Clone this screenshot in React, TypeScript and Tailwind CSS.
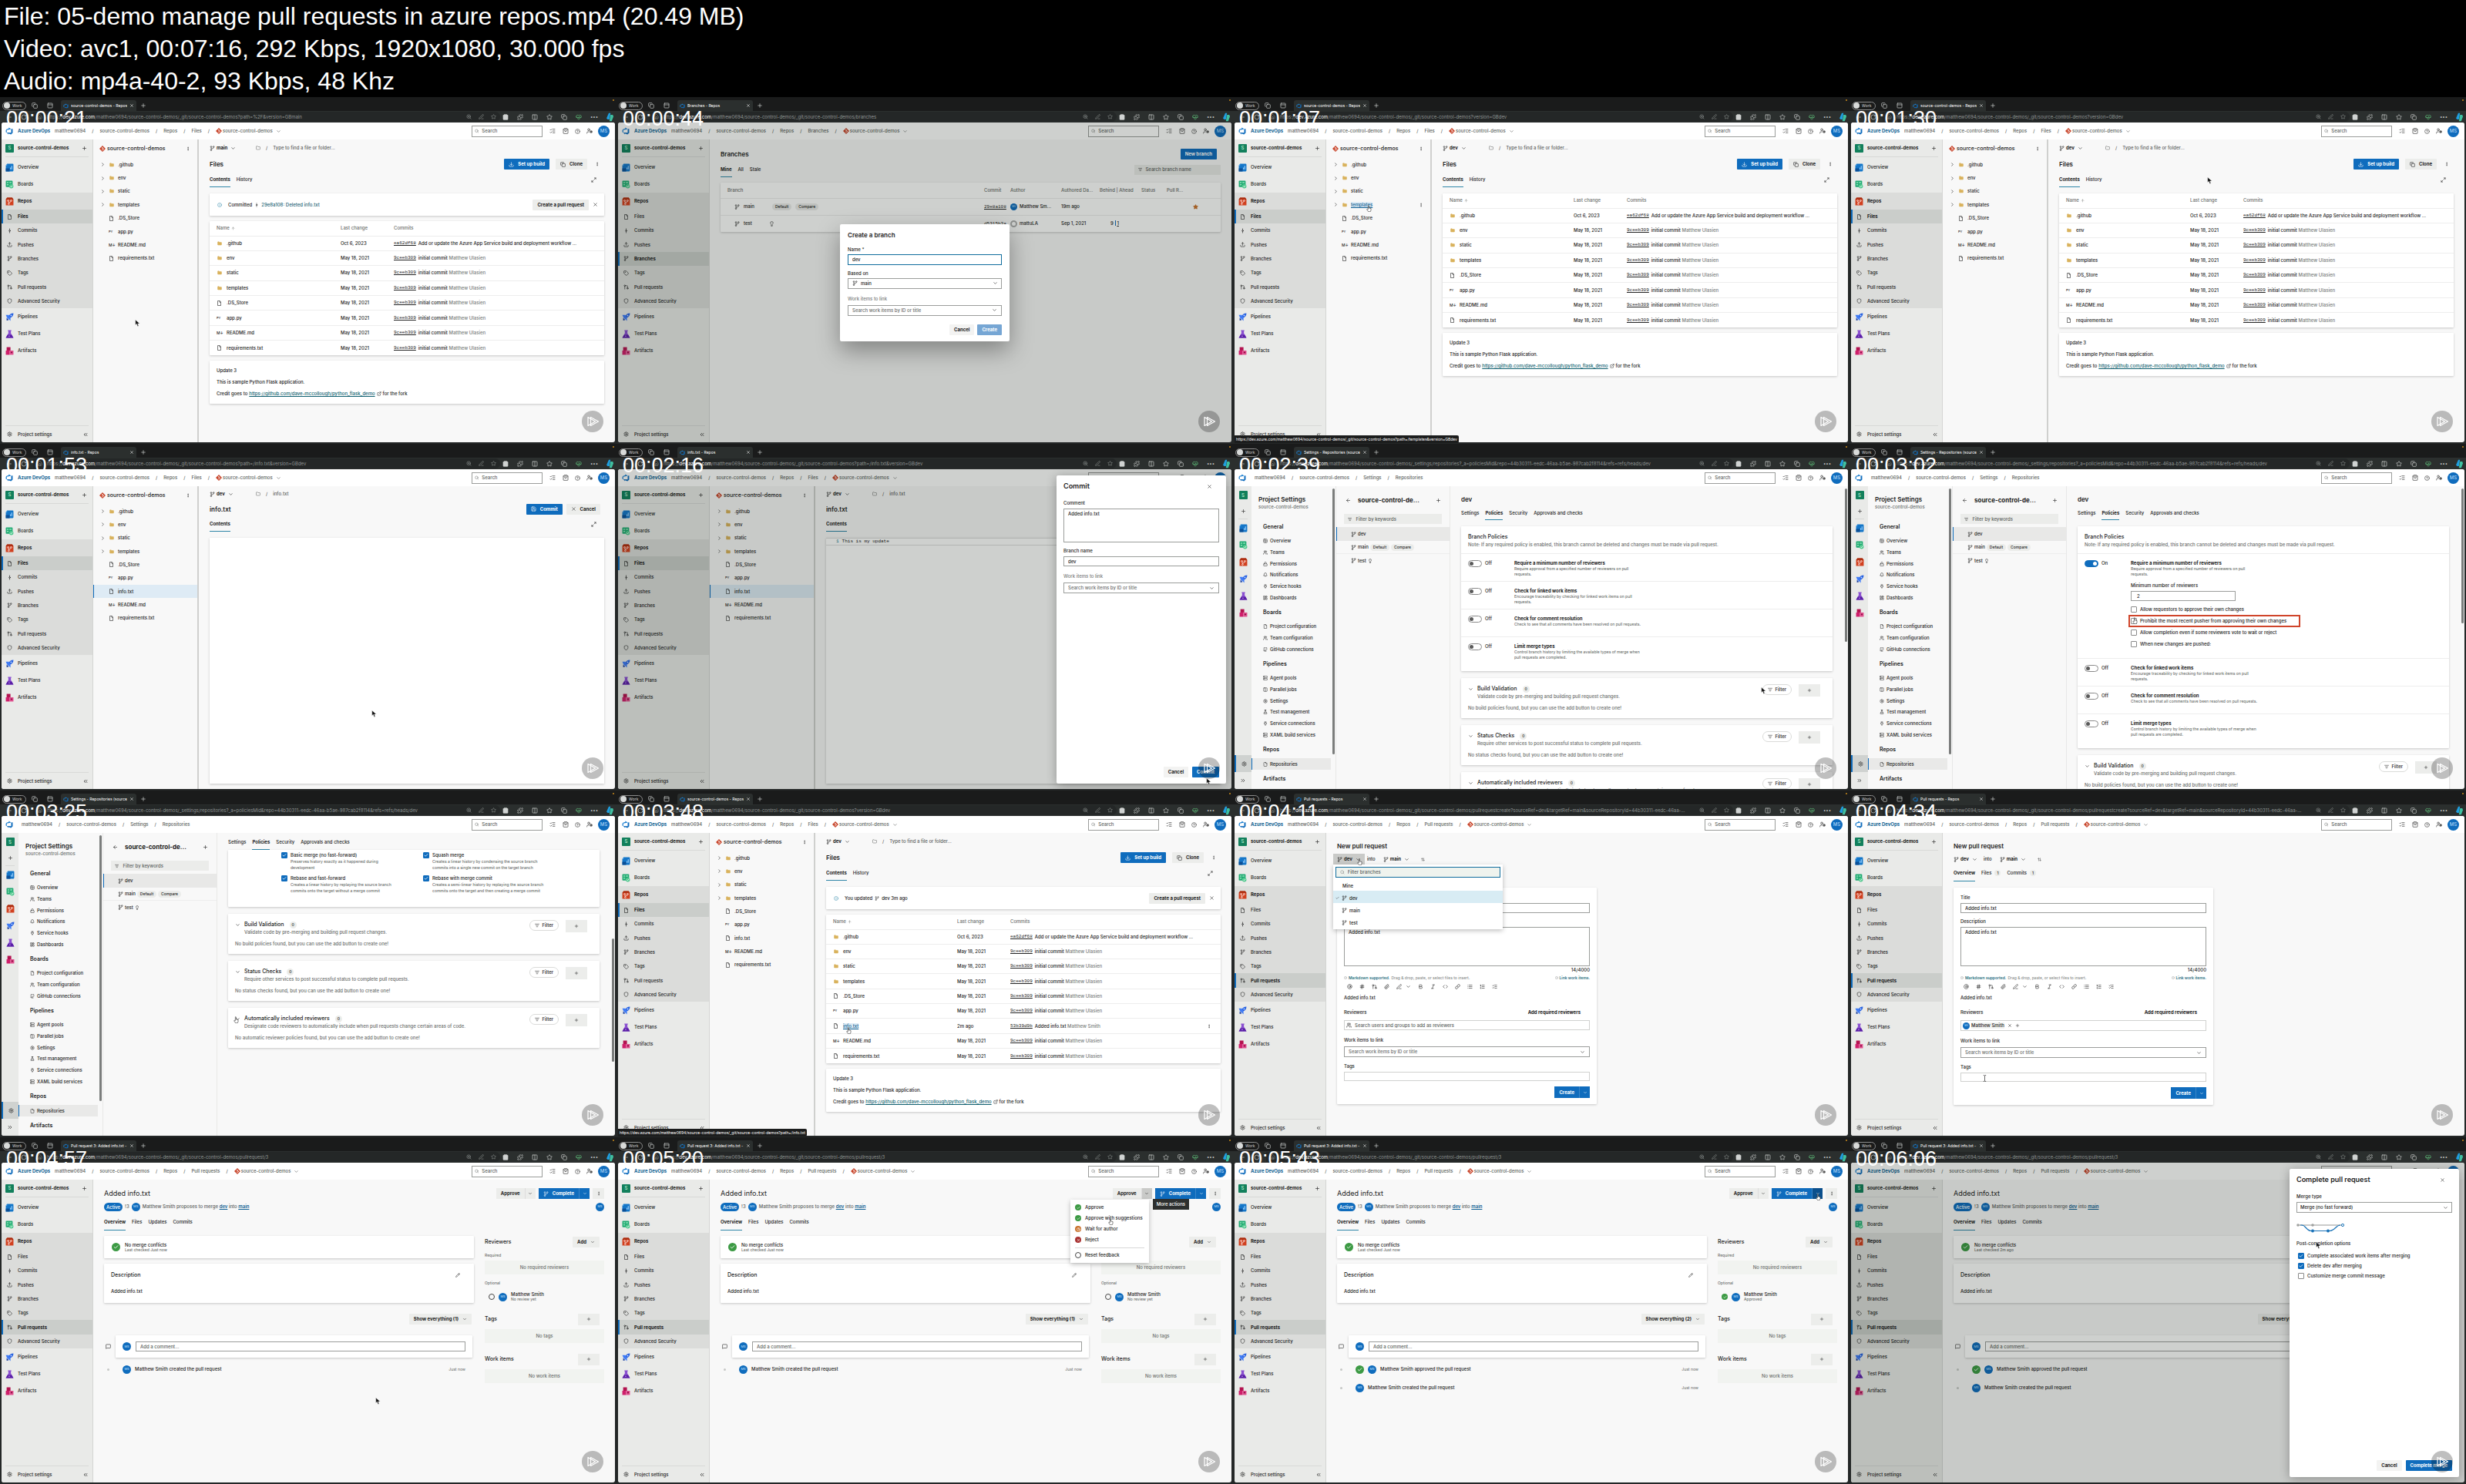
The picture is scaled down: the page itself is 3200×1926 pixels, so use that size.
import React from 'react';
import clsx from 'clsx';
import {
  ArrowLeft, ArrowUp, ArrowUpDown, AtSign, Bell, Bold, Check, ChevronDown, ChevronRight, ChevronsLeft,
  ChevronsRight, Clock, Code, Columns2, Copy, Download, ExternalLink, File, FlaskConical, Folder,
  GitCommitVertical, GitPullRequest, Github, Grid2x2, Hash, HeartPulse, House, Info, Italic, LayoutDashboard,
  Lightbulb, Link, List, ListChecks, ListFilter, ListOrdered, Lock, Maximize2, MessageSquare, MoreVertical,
  Paperclip, PanelTop, Pencil, Plug, Plus, Puzzle, RotateCw, Save, Search, Settings, Shield, ShoppingBag, Star,
  Tag, Upload, UserCog, Users, X, ZoomIn, CircleHelp, PenLine, Server,
} from 'lucide-react';

const ICON = 'size-[7px] shrink-0';
const CARD = 'shrink-0 rounded-[1px] bg-white shadow-[0_1px_3px_rgba(0,0,0,0.2)]';

/* ---------- small drawings ---------- */

function BranchIcon({ className = 'size-[7px]' }: { className?: string }) {
  return (
    <svg viewBox="0 0 14 14" className={clsx('shrink-0', className)} fill="none" stroke="currentColor" strokeWidth="1.2">
      <circle cx="4" cy="3" r="1.6" />
      <circle cx="10.5" cy="3" r="1.6" />
      <circle cx="4" cy="11.5" r="1.6" />
      <path d="M4 4.6v5.3M10.5 4.6c0 3-3.5 2.6-6.5 4" />
    </svg>
  );
}

function PageIcon({ className = 'size-[7px]' }: { className?: string }) {
  return (
    <svg viewBox="0 0 14 14" className={clsx('shrink-0', className)} fill="none" stroke="currentColor" strokeWidth="1.2">
      <path d="M3 1h5.500L11 4v9H3zM8 1v3.500h3" />
    </svg>
  );
}

function GitIcon() {
  return (
    <svg viewBox="0 0 14 14" className="size-[8px] shrink-0">
      <path d="M7 0l7 7-7 7-7-7z" fill="#c8452b" />
      <path d="M5 3l2.5 2.5M7 5v5M7.2 5.5l2.2 2" stroke="#fff" strokeWidth="1" />
      <circle cx="7" cy="5" r="1" fill="#fff" />
      <circle cx="7" cy="10" r="1" fill="#fff" />
      <circle cx="9.6" cy="7.4" r="1" fill="#fff" />
    </svg>
  );
}

function DevOpsLogo({ className }: { className: string }) {
  return (
    <svg viewBox="0 0 18 18" className={clsx('shrink-0', className)}>
      <path d="M17 4v9.7l-4 3.3-6.2-2.2V17l-3.5-4.6 10.2.8V4.500z" fill="#0f6cbd" />
      <path d="M13.600 4.500L7.900 1v2.300L2.700 4.800 1 7v4.900l2.300 1V6.600z" fill="#1b7fd0" />
    </svg>
  );
}

function OverviewIcon() {
  return (
    <svg viewBox="0 0 20 20" className="size-[11px] shrink-0">
      <path d="M4 1h13a2 2 0 012 2v14a2 2 0 01-2 2H1V5z" fill="#1476c8" />
      <path d="M4 1v4H1z" fill="#6cb8f2" />
      <path d="M1 12h9v7H1z" fill="#0b4f96" />
      <path d="M11 10h2v4h-2zM14 6h2v8h-2z" fill="#9fd4ff" />
    </svg>
  );
}

function BoardsIcon() {
  return (
    <svg viewBox="0 0 20 20" className="size-[11px] shrink-0">
      <rect x="1" y="1" width="16" height="15" rx="1.500" fill="#1fa971" />
      <path d="M3.500 4h4v3h-4zM3.500 9h4v3h-4zM9.500 4h5v3h-5z" fill="#8fe0b8" />
      <circle cx="14" cy="14" r="5" fill="#52c98f" />
      <path d="M11.500 14l2 2 3.300-3.500" stroke="#fff" strokeWidth="1.500" fill="none" />
    </svg>
  );
}

function ReposIcon() {
  return (
    <svg viewBox="0 0 20 20" className="size-[11px] shrink-0">
      <path d="M4 1h12l3 4v14H1V5z" fill="#d1401f" />
      <path d="M4 1h12l3 4H1z" fill="#a82c10" />
      <g fill="none" stroke="#fff" strokeWidth="1.300">
        <circle cx="6.500" cy="8" r="1.600" />
        <circle cx="13.500" cy="8" r="1.600" />
        <circle cx="8" cy="15.500" r="1.600" />
        <path d="M7 9.500l1 4.400M13 9.500c-.5 3-4 2-4.800 4" />
      </g>
    </svg>
  );
}

function PipelinesIcon() {
  return (
    <svg viewBox="0 0 20 20" className="size-[11px] shrink-0">
      <path d="M19 1c-6 0-9 3-11 7l4 4c4-2 7-5 7-11z" fill="#2560e0" />
      <path d="M1 5h7l4 7v7l-4-4-4-3z" fill="#3f7bf5" />
      <path d="M3 12l5 5-5 1z" fill="#12389c" />
      <circle cx="13.500" cy="6.500" r="1.800" fill="#bcd3ff" />
    </svg>
  );
}

function TestPlansIcon() {
  return (
    <svg viewBox="0 0 20 20" className="size-[11px] shrink-0">
      <path d="M6 1h8v2h-1v5l6 11H1L7 8V3H6z" fill="#8a4fd0" />
      <path d="M5 12h10l4 7H1z" fill="#5a1fa6" />
      <circle cx="9" cy="15" r="1.200" fill="#d8b8ff" />
    </svg>
  );
}

function ArtifactsIcon() {
  return (
    <svg viewBox="0 0 20 20" className="size-[11px] shrink-0">
      <path d="M3 1h9v8H3z" fill="#b3124f" />
      <path d="M1 9h9v10H1z" fill="#cf1f6b" />
      <path d="M10 9h9v10h-9z" fill="#e0508f" />
      <path d="M12.500 12h4v3h-4z" fill="#8e0c40" />
    </svg>
  );
}

function ProjectBadge() {
  return <span className="grid size-[11px] shrink-0 place-items-center rounded-[1px] bg-[#12805c] text-[#bff0d8]">S</span>;
}

function Avatar({ className = 'size-[11px] text-[4px]' }: { className?: string }) {
  return (
    <span className={clsx('grid shrink-0 place-items-center rounded-full bg-[#0f6cbd] text-[#a9d2f5]', className)}>MS</span>
  );
}

function Dot({ kind }: { kind: 'ok' | 'wait' | 'no' | 'none' }) {
  if (kind === 'none') return <span className="size-[8px] shrink-0 rounded-full border border-[#444]" />;
  const Glyph = kind === 'ok' ? Check : kind === 'wait' ? Clock : X;
  return (
    <span
      className={clsx(
        'grid size-[8px] shrink-0 place-items-center rounded-full text-white',
        kind === 'ok' && 'bg-[#3c9a44]',
        kind === 'wait' && 'bg-[#c8702a]',
        kind === 'no' && 'bg-[#a83232]'
      )}
    >
      <Glyph className="size-[5px]" strokeWidth={3} />
    </span>
  );
}

function OkCircle() {
  return (
    <span className="grid size-[11px] shrink-0 place-items-center rounded-full bg-[#3c9a44] text-white">
      <Check className="size-[7px]" strokeWidth={3} />
    </span>
  );
}

function Watermark() {
  return (
    <svg viewBox="0 0 28 28" className="absolute right-[17px] bottom-[15px] z-20 size-[28px]">
      <circle cx="14" cy="14" r="14" fill="#000" fillOpacity=".25" />
      <g fill="none" stroke="#fff" strokeWidth="1.200" strokeLinejoin="round">
        <path d="M8 8.500v11l9.500-5.500z" />
        <path d="M11.500 8.500v11l10-5.500z" />
      </g>
    </svg>
  );
}

function Cursor({ kind = 'arrow', at }: { kind?: 'arrow' | 'hand' | 'text'; at: string }) {
  return (
    <svg viewBox="0 0 12 16" className={clsx('absolute z-30 h-[9px] w-[7px]', at)} stroke="#fff" strokeWidth=".8">
      {kind === 'arrow' && <path d="M1 0v12l3-2.500L6 15l2.500-1-2-5H11z" fill="#111" />}
      {kind === 'hand' && (
        <path d="M4 1.500c1-1 2 0 2 1V7l4.500 1v4L9 15.500H4.500L1 10.500 2 9l2 1z" fill="#fff" stroke="#222" strokeWidth="1" />
      )}
      {kind === 'text' && <path d="M3 1h2l1 1 1-1h2M6 2v12M3 15h2l1-1 1 1h2" fill="none" stroke="#222" strokeWidth="1.200" />}
    </svg>
  );
}

/* ---------- browser shell ---------- */

function Chrome({ tab, url }: { tab: string; url: string }) {
  return (
    <div className="shrink-0 font-normal text-[#d0d3d2]">
      <div className="flex h-[18px] items-end bg-[#1a1b1b]">
        <div className="flex h-[14px] flex-1 items-center pl-[3px]">
          <span className="flex h-[11px] w-[31px] items-center gap-[3px] rounded-full border border-[#8a8a8a] pl-[1px] text-[5px]">
            <span className="size-[8px] rounded-full bg-[#d8dad9]" />
            Work
          </span>
          <Copy className="ml-[7px] size-[8px]" />
          <PanelTop className="ml-[12px] size-[8px]" />
          <div className="ml-[10px] flex h-full w-[98px] items-center gap-[3px] rounded-t-[3px] bg-[#2b2f2e] px-[3px] text-[5px] text-white">
            <DevOpsLogo className="size-[7px]" />
            <span className="flex-1 overflow-hidden whitespace-nowrap">{tab}</span>
            <X className="size-[6px] shrink-0" />
          </div>
          <Plus className="ml-[5px] size-[8px]" />
        </div>
        <span className="mr-[3px] mb-[13px] size-[2px] rounded-full bg-[#c98a1b]" />
      </div>
      <div className="flex h-[15px] items-center bg-[#2b2f2e]">
        <ArrowLeft className="ml-[8px] size-[8px]" />
        <RotateCw className="ml-[11px] size-[8px]" />
        <div className="ml-[8px] flex h-[13px] w-[606px] items-center rounded-r-full bg-[#242727] pl-[5px] text-[#8f9493]">
          <House className="size-[7px]" />
          <div className="ml-[6px] w-[528px] truncate">
            https://<span className="text-white">dev.azure.com</span>/{url}
          </div>
          <div className="ml-auto flex gap-[9px] pr-[5px]">
            <ZoomIn className="size-[7px]" />
            <PenLine className="size-[7px]" />
            <Star className="size-[7px]" />
          </div>
        </div>
        <div className="ml-auto flex items-center gap-[11px] pr-[4px]">
          <ShoppingBag className="size-[8px]" fill="currentColor" />
          <Puzzle className="size-[8px]" />
          <Columns2 className="size-[8px]" />
          <Star className="size-[8px]" />
          <Copy className="size-[8px]" />
          <HeartPulse className="size-[8px] text-[#5fbf7a]" />
          <span>•••</span>
          <svg viewBox="0 0 12 14" className="h-[12px] w-[9px]">
            <path d="M4 0h3L5 11H2L0 9z" fill="#1f9fe0" />
            <path d="M7 3h4l1 3-3 8H5z" fill="#3fc0a0" />
          </svg>
        </div>
      </div>
    </div>
  );
}

function TopBar({ crumbs, repo, compact }: { crumbs: string[]; repo?: boolean; compact?: boolean }) {
  return (
    <header className="flex h-[22px] shrink-0 items-center bg-white pl-[5px] text-[#5c5f5d]">
      <DevOpsLogo className="size-[10px]" />
      {!compact && <a href="#" className="ml-[6px] font-bold text-[#0f5f92]">Azure DevOps</a>}
      <nav className={clsx('flex items-center gap-[8px]', compact ? 'ml-[11px]' : 'ml-[6px]')}>
        {crumbs.map((c, i) => (
          <React.Fragment key={i}>
            {i > 0 && <span>/</span>}
            <a href="#">{c}</a>
          </React.Fragment>
        ))}
        {repo && (
          <>
            <span>/</span>
            <a href="#" className="flex items-center gap-[1px]">
              <GitIcon />
              source-control-demos
              <ChevronDown className="ml-[3px] size-[7px]" />
            </a>
          </>
        )}
      </nav>
      <div className="ml-auto flex items-center">
        <label className="flex h-[15px] w-[92px] items-center gap-[4px] border border-[#9b9d9b] bg-white px-[3px]">
          <Search className="size-[6px]" />
          <input aria-label="Search" placeholder="Search" className="w-full placeholder:text-[#5c5f5d]" />
        </label>
        <ListChecks className="ml-[9px] size-[8px] text-[#333]" />
        <ShoppingBag className="ml-[9px] size-[8px] text-[#333]" />
        <CircleHelp className="ml-[8px] size-[7px] text-[#333]" />
        <UserCog className="ml-[8px] size-[8px] text-[#333]" />
        <Avatar className="mr-[7px] ml-[7px] size-[15px] text-[6px]" />
      </div>
    </header>
  );
}

const repoLinks = [
  { name: 'Files', icon: PageIcon },
  { name: 'Commits', icon: GitCommitVertical },
  { name: 'Pushes', icon: Upload },
  { name: 'Branches', icon: BranchIcon },
  { name: 'Tags', icon: Tag },
  { name: 'Pull requests', icon: GitPullRequest },
  { name: 'Advanced Security', icon: Shield },
];

function Sidebar({ active }: { active: string }) {
  return (
    <aside className="flex w-[119px] shrink-0 flex-col border-r border-[#d4d5d3] bg-[#e9eae8] text-[#1a1a1a]">
      <div className="mx-[5px] flex h-[23px] items-center gap-[5px] border-b border-[#d8d9d7]">
        <ProjectBadge />
        <span className="font-bold">source-control-demos</span>
        <Plus className="mr-[2px] ml-auto size-[7px]" />
      </div>
      <a href="#" className="mt-[2px] flex h-[22px] items-center gap-[5px] pl-[5px]"><OverviewIcon />Overview</a>
      <a href="#" className="flex h-[22px] items-center gap-[5px] pl-[5px]"><BoardsIcon />Boards</a>
      <div className="bg-[#dbdcda]">
        <a href="#" className="flex h-[22px] items-center gap-[5px] pl-[5px] font-bold"><ReposIcon />Repos</a>
        <div className="grid h-[128px] auto-rows-fr">
          {repoLinks.map(({ name, icon: Icon }) => (
            <a
              key={name}
              href="#"
              className={clsx(
                'flex items-center gap-[7px] border-l-2 pl-[5px]',
                name === active ? 'border-[#0f6cbd] bg-[#cacdca] font-bold' : 'border-transparent'
              )}
            >
              <Icon className={ICON} />
              {name}
            </a>
          ))}
        </div>
      </div>
      <a href="#" className="flex h-[22px] items-center gap-[5px] pl-[5px]"><PipelinesIcon />Pipelines</a>
      <a href="#" className="flex h-[22px] items-center gap-[5px] pl-[5px]"><TestPlansIcon />Test Plans</a>
      <a href="#" className="flex h-[22px] items-center gap-[5px] pl-[5px]"><ArtifactsIcon />Artifacts</a>
      <a href="#" className="mx-[5px] mt-auto flex h-[22px] items-center gap-[7px] border-t border-[#d8d9d7] pl-[2px]">
        <Settings className={ICON} />
        Project settings
        <ChevronsLeft className="ml-auto size-[8px]" />
      </a>
    </aside>
  );
}

type FrameProps = {
  time: string;
  tab: string;
  url: string;
  crumbs?: string[];
  compact?: boolean;
  status?: string;
  cursor?: React.ReactNode;
  overlay?: React.ReactNode;
  children: React.ReactNode;
};

function Frame({ time, tab, url, crumbs = ['Files'], compact, status, cursor, overlay, children }: FrameProps) {
  const base = compact ? ['matthew0694', 'source-control-demos'] : ['matthew0694', 'source-control-demos', 'Repos'];
  return (
    <section className="relative flex aspect-video flex-col overflow-hidden bg-[#242727]">
      <Chrome tab={tab} url={'matthew0694/source-control-demos/' + url} />
      <div className="relative mx-[2px] mb-[2px] flex min-h-0 flex-1 flex-col overflow-hidden rounded-[3px] bg-[#f8f8f8]">
        <TopBar crumbs={[...base, ...crumbs]} repo={!compact} compact={compact} />
        <div className="flex min-h-0 flex-1">{children}</div>
        {overlay && <div className="absolute inset-0 bg-[#0a1408]/20">{overlay}</div>}
      </div>
      {status && (
        <div className="absolute bottom-px left-[2px] z-20 h-[10px] rounded-r-[2px] bg-[#1c1d1d] px-[2px] text-[5px] leading-[10px] font-normal text-white">
          {status}
        </div>
      )}
      <Watermark />
      {cursor}
      <time className="absolute top-[15px] left-[8px] z-20 font-['Liberation_Sans',sans-serif] text-[27px] leading-[27px] font-normal text-white">
        {time}
      </time>
    </section>
  );
}

/* ---------- shared controls ---------- */

function Button({ primary, className, children }: { primary?: boolean; className?: string; children: React.ReactNode }) {
  return (
    <button
      className={clsx(
        'flex h-[14px] shrink-0 items-center justify-center gap-[5px] rounded-[1px] px-[6px] font-bold whitespace-nowrap',
        primary ? 'bg-[#0f6cbd] text-white' : 'bg-[#ecedeb] text-[#222]',
        className
      )}
    >
      {children}
    </button>
  );
}

function Tabs({ items, active, counts, className }: { items: string[]; active: string; counts?: string[]; className?: string }) {
  return (
    <nav className={clsx('flex shrink-0 gap-[8px] text-[#222]', className)}>
      {items.map((t, i) => (
        <a
          key={t}
          href="#"
          className={clsx('flex items-center gap-[4px] border-b', t === active ? 'border-[#2f86a8] font-bold' : 'border-transparent')}
        >
          {t}
          {counts?.[i] && <span className="rounded-full bg-[#eaebe9] px-[3px] text-[5px]">{counts[i]}</span>}
        </a>
      ))}
    </nav>
  );
}

function TickBox({ label, note, checked }: { label: string; note?: string; checked?: boolean }) {
  return (
    <label className="flex gap-[4px] text-[#222]">
      <span className="relative h-[8px] shrink-0">
        <input type="checkbox" defaultChecked={checked} className="block size-[8px] appearance-none rounded-[1px] border border-[#8a8a8a] bg-white checked:border-[#0f6cbd] checked:bg-[#0f6cbd]" />
        {checked && <Check className="absolute top-px left-px size-[6px] text-white" strokeWidth={3} />}
      </span>
      <span className="leading-[8px]">
        {label}
        {note && <span className="block text-[5px] leading-[8px] text-[#6b6e6c]">{note}</span>}
      </span>
    </label>
  );
}

function Combo({ label, dim, className }: { label: string; dim?: boolean; className?: string }) {
  return (
    <label className={clsx('block', className)}>
      <span className={clsx('block h-[12px] leading-[12px]', dim && 'text-[#7a7d7b]')}>{label}</span>
      <span className="mt-[2px] flex h-[14px] items-center border border-[#9b9d9b] bg-white px-[5px]">
        <input placeholder="Search work items by ID or title" className="w-full placeholder:text-[#6b6e6c]" />
        <ChevronDown className={ICON} />
      </span>
    </label>
  );
}

function SidePanel({ title, action, children }: { title: string; action: string; children: React.ReactNode }) {
  return (
    <div className="absolute top-[8px] right-[7px] bottom-[7px] flex w-[220px] flex-col rounded-[2px] bg-white px-[9px] text-[#222] shadow-[0_2px_14px_rgba(0,0,0,0.3)]">
      <div className="flex h-[28px] items-center justify-between pr-[9px]">
        <h2 className="text-[9px] font-semibold">{title}</h2>
        <X className={ICON} />
      </div>
      {children}
      <div className="mt-auto mb-[8px] flex justify-end gap-[5px]">
        <Button className="bg-[#f3f3f2]">Cancel</Button>
        <Button primary>{action}</Button>
      </div>
    </div>
  );
}

/* ---------- repo files ---------- */

const baseFiles = ['.github', 'env', 'static', 'templates', '.DS_Store', 'app.py', 'README.md', 'requirements.txt'];
const filesWithInfo = ['.github', 'env', 'static', 'templates', '.DS_Store', 'app.py', 'info.txt', 'README.md', 'requirements.txt'];
const folders = ['.github', 'env', 'static', 'templates'];

function FileIcon({ name }: { name: string }) {
  if (folders.includes(name)) return <Folder className="size-[6px] shrink-0 text-[#d9b25c]" fill="currentColor" />;
  if (name === 'app.py') return <span className="w-[7px] shrink-0 text-[4px]">PY</span>;
  if (name === 'README.md') return <span className="w-[7px] shrink-0 text-[5px]">M↓</span>;
  return <PageIcon />;
}

function Tree({ files, selected, hovered }: { files: string[]; selected?: string; hovered?: string }) {
  return (
    <div className="w-[137px] shrink-0 border-r-2 border-[#cfd0ce] text-[#222]">
      <div className="flex h-[24px] items-center gap-[2px] pl-[8px] text-[7px]">
        <GitIcon />
        source-control-demos
        <MoreVertical className="mr-[9px] ml-auto size-[6px]" />
      </div>
      <div className={clsx('grid auto-rows-fr', files.length > 8 ? 'h-[156px]' : 'h-[139px]')}>
        {files.map(f => (
          <a
            key={f}
            href="#"
            className={clsx(
              'flex items-center gap-[5px] border-l pl-[8px]',
              f === selected ? 'border-[#0f6cbd] bg-[#deebf5]' : 'border-transparent'
            )}
          >
            <span className="w-[6px]">{folders.includes(f) && <ChevronRight className={ICON} />}</span>
            <span className="flex w-[7px] justify-center"><FileIcon name={f} /></span>
            <span className={clsx(f === hovered && 'bg-[#deebf5] text-[#0f5f92] underline')}>{f}</span>
            {f === hovered && <MoreVertical className="mr-[9px] ml-auto size-[6px]" />}
          </a>
        ))}
      </div>
    </div>
  );
}

function BranchBar({ branch, path, className }: { branch: string; path: string; className: string }) {
  return (
    <div className={clsx('flex shrink-0 items-center text-[#5c5f5d]', className)}>
      <button className="flex w-[60px] items-center gap-[2px] font-bold text-[#222]">
        <BranchIcon />
        {branch}
        <ChevronDown className="ml-[2px] size-[7px]" />
      </button>
      <Folder className="size-[6px]" />
      <span className="mx-[7px]">/</span>
      {path}
    </div>
  );
}

function Files({ branch, banner, files = baseFiles, hovered }: { branch: string; banner?: React.ReactNode; files?: string[]; hovered?: string }) {
  return (
    <main className="flex min-w-0 flex-1 flex-col px-[14px] text-[#222]">
      <BranchBar branch={branch} path="Type to find a file or folder..." className="h-[22px]" />
      <div className="flex h-[20px] shrink-0 items-center gap-[8px]">
        <h1 className="mr-auto text-[8px] font-semibold">Files</h1>
        <Button primary><Download className={ICON} />Set up build</Button>
        <Button><Copy className={ICON} />Clone</Button>
        <MoreVertical className="mr-[6px] ml-[2px] size-[6px]" />
      </div>
      <div className="flex h-[20px] shrink-0 items-stretch justify-between">
        <Tabs items={['Contents', 'History']} active="Contents" />
        <Maximize2 className="mr-[10px] size-[7px] self-center" />
      </div>
      {banner && (
        <div className={clsx(CARD, 'mt-[8px] flex h-[29px] items-center gap-[3px] pr-[8px] pl-[10px]')}>
          <Info className="mr-[5px] size-[6px] text-[#2f86a8]" />
          {banner}
          <Button className="ml-auto">Create a pull request</Button>
          <X className="ml-[2px] size-[7px]" />
        </div>
      )}
      <table
        className={clsx(
          CARD,
          'w-full table-fixed border-collapse text-left',
          files.length > 8 ? 'h-[193px]' : 'h-[174px]',
          banner ? 'mt-[7px]' : 'mt-[8px]'
        )}
      >
        <thead>
          <tr className="h-[19px] text-[#6b6e6c]">
            <th className="w-[170px] pl-[9px] font-medium"><span className="flex items-center gap-[2px]">Name <ArrowUp className="size-[5px]" /></span></th>
            <th className="w-[69px] font-medium">Last change</th>
            <th className="font-medium">Commits</th>
          </tr>
        </thead>
        <tbody>
          {files.map(f => (
            <tr key={f} className="h-[19px] border-t border-[#ededed]">
              <td className="pl-[9px]">
                <span className="flex items-center gap-[6px]">
                  <span className="flex w-[7px] justify-center"><FileIcon name={f} /></span>
                  <span className={clsx(f === hovered && 'bg-[#deebf5] text-[#0f5f92] underline')}>{f}</span>
                </span>
              </td>
              <td>{f === '.github' ? 'Oct 6, 2023' : f === 'info.txt' ? '2m ago' : 'May 18, 2021'}</td>
              <td className="pr-[12px]">
                <div className="flex items-center gap-[3px]">
                  <a href="#" className="font-['Liberation_Mono',monospace] underline">
                    {f === '.github' ? 'ea62df68' : f === 'info.txt' ? '53b39d9b' : '9ceeb309'}
                  </a>
                  {f === '.github' ? (
                    <span className="whitespace-nowrap">Add or update the Azure App Service build and deployment workflow ...</span>
                  ) : (
                    <span>
                      {f === 'info.txt' ? 'Added info.txt ' : 'initial commit '}
                      <span className="text-[#7a7d7b]">{f === 'info.txt' ? 'Matthew Smith' : 'Matthew Ulasien'}</span>
                    </span>
                  )}
                  {f === hovered && <MoreVertical className="ml-auto size-[6px]" />}
                </div>
              </td>
            </tr>
          ))}
        </tbody>
      </table>
      <div className={clsx(CARD, 'mt-[7px] h-[56px] px-[9px] pt-[5px] leading-[15px]')}>
        <p>Update 3</p>
        <p>This is sample Python Flask application.</p>
        <p className="flex items-center gap-[2px]">
          Credit goes to <a href="#" className="text-[#0f5f6f] underline">https://github.com/dave-mccollough/python_flask_demo</a>
          <ExternalLink className="size-[6px]" /> for the fork
        </p>
      </div>
    </main>
  );
}

function Editor({ text, buttons }: { text?: string; buttons?: boolean }) {
  return (
    <main className="flex min-w-0 flex-1 flex-col px-[14px] pb-[7px] text-[#222]">
      <BranchBar branch="dev" path="info.txt" className="h-[20px]" />
      <div className="flex h-[19px] shrink-0 items-center gap-[5px] pr-[5px]">
        <h1 className="mr-auto text-[8px] font-semibold">info.txt</h1>
        {buttons && (
          <>
            <Button primary><Save className={ICON} />Commit</Button>
            <Button><X className={ICON} />Cancel</Button>
          </>
        )}
      </div>
      <div className="flex h-[20px] shrink-0 items-stretch justify-between">
        <Tabs items={['Contents']} active="Contents" />
        <Maximize2 className="mr-[10px] size-[7px] self-center" />
      </div>
      <div className="mt-[8px] flex-1 bg-white font-['Liberation_Mono',monospace] shadow-[0_1px_3px_rgba(0,0,0,0.2)]">
        {text && (
          <div className="flex gap-[4px] border-y border-[#dcdcdc] pl-[13px]">
            <span className="text-[#237893]">1</span>
            {text}
          </div>
        )}
      </div>
    </main>
  );
}

function CommitPanel() {
  return (
    <SidePanel title="Commit" action="Commit">
      <label className="block">
        <span className="mt-[2px] block h-[13px] leading-[12px]">Comment</span>
        <textarea defaultValue="Added info.txt" className="block h-[44px] w-full resize-none border border-[#9b9d9b] px-[5px] py-[2px] leading-[8px]" />
      </label>
      <label className="mt-[5px] block">
        <span className="block h-[13px] leading-[12px]">Branch name</span>
        <input defaultValue="dev" className="block h-[13px] w-full border border-[#9b9d9b] px-[5px]" />
      </label>
      <Combo label="Work items to link" dim className="mt-[7px]" />
    </SidePanel>
  );
}

/* ---------- branches ---------- */

function Pill({ children }: { children: React.ReactNode }) {
  return <span className="rounded-full bg-[#ebecea] px-[4px] text-[5px] leading-[9px]">{children}</span>;
}

function Branches() {
  return (
    <main className="flex min-w-0 flex-1 flex-col px-[14px] pt-[9px] text-[#222]">
      <div className="flex h-[20px] items-center justify-between pr-[5px]">
        <h1 className="text-[8px] font-semibold">Branches</h1>
        <Button primary>New branch</Button>
      </div>
      <div className="flex h-[20px] items-stretch justify-between">
        <Tabs items={['Mine', 'All', 'Stale']} active="Mine" />
        <label className="flex h-[13px] w-[112px] items-center gap-[4px] self-center bg-[#e9eae8] px-[5px]">
          <ListFilter className="size-[6px]" />
          <input aria-label="Search branch name" placeholder="Search branch name" className="w-full placeholder:text-[#5c5f5d]" />
        </label>
      </div>
      <table className={clsx(CARD, 'mt-[7px] h-[64px] w-full table-fixed border-collapse text-left')}>
        <thead>
          <tr className="h-[20px] text-[#6b6e6c] [&>th]:font-medium">
            <th className="pl-[9px]">Branch</th>
            <th className="w-[34px]">Commit</th>
            <th className="w-[66px]">Author</th>
            <th className="w-[50px]">Authored Da...</th>
            <th className="w-[54px]">Behind | Ahead</th>
            <th className="w-[33px]">Status</th>
            <th className="w-[34px]">Pull R...</th>
            <th className="w-[36px]" />
          </tr>
        </thead>
        <tbody>
          <tr className="h-[22px] border-t border-[#ededed]">
            <td className="pl-[18px]">
              <span className="flex items-center gap-[5px]">
                <BranchIcon /><span className="w-[32px]">main</span><Pill>Default</Pill><Pill>Compare</Pill>
              </span>
            </td>
            <td><a href="#" className="font-['Liberation_Mono',monospace] underline">29e8a108</a></td>
            <td><span className="flex items-center gap-[3px]"><Avatar className="size-[9px] text-[3px]" />Matthew Sm...</span></td>
            <td>19m ago</td>
            <td />
            <td />
            <td />
            <td><Star className="size-[7px] text-[#c8702a]" fill="currentColor" /></td>
          </tr>
          <tr className="h-[22px] border-t border-[#ededed]">
            <td className="pl-[18px]">
              <span className="flex items-center gap-[5px]"><BranchIcon /><span className="w-[28px]">test</span><Lightbulb className={ICON} /></span>
            </td>
            <td><a href="#" className="font-['Liberation_Mono',monospace] underline">d5315b3a</a></td>
            <td>
              <span className="flex items-center gap-[3px]">
                <span className="size-[9px] rounded-full border-2 border-[#b0b0b0] bg-white" />mattuLA
              </span>
            </td>
            <td>Sep 1, 2021</td>
            <td className="pl-[14px]"><span className="border-r border-[#0f6cbd] pr-[2px]">9</span> <span className="underline">1</span></td>
            <td />
            <td />
            <td />
          </tr>
        </tbody>
      </table>
    </main>
  );
}

function CreateBranchDialog() {
  return (
    <div className="grid h-full place-items-center">
      <div className="w-[220px] rounded-[2px] bg-white px-[10px] pb-[8px] text-[#222] shadow-[0_12px_30px_rgba(0,0,0,0.35)]">
        <h2 className="h-[26px] text-[8px] leading-[28px] font-semibold">Create a branch</h2>
        <label className="block">
          <span className="block h-[13px] leading-[13px]">Name *</span>
          <input defaultValue="dev" className="block h-[14px] w-full border border-[#0f6c9d] px-[5px]" />
        </label>
        <label className="mt-[5px] block">
          <span className="block h-[12px] leading-[12px]">Based on</span>
          <span className="relative flex h-[14px] items-center border border-[#9b9d9b] pl-[5px]">
            <BranchIcon />
            <select className="h-full w-full appearance-none pl-[4px]"><option>main</option></select>
            <ChevronDown className="absolute right-[4px] size-[7px]" />
          </span>
        </label>
        <Combo label="Work items to link" dim className="mt-[7px]" />
        <div className="mt-[11px] flex justify-end gap-[4px]">
          <Button className="bg-[#f3f3f2]">Cancel</Button>
          <button disabled className="h-[14px] rounded-[1px] bg-[#76a6d4] px-[6px] font-bold text-white">Create</button>
        </div>
      </div>
    </div>
  );
}

/* ---------- project settings ---------- */

const settingsGroups = [
  {
    title: 'General',
    rows: 'h-[88px]',
    items: [['Overview', Grid2x2], ['Teams', Users], ['Permissions', Lock], ['Notifications', Bell], ['Service hooks', Plug], ['Dashboards', LayoutDashboard]],
  },
  { title: 'Boards', rows: 'h-[44px]', items: [['Project configuration', PageIcon], ['Team configuration', Users], ['GitHub connections', Github]] },
  {
    title: 'Pipelines',
    rows: 'h-[88px]',
    items: [['Agent pools', Server], ['Parallel jobs', Columns2], ['Settings', Settings], ['Test management', FlaskConical], ['Service connections', Plug], ['XAML build services', Server]],
  },
  { title: 'Repos', rows: 'h-[15px]', items: [['Repositories', File]] },
  { title: 'Artifacts', rows: 'h-[15px]', items: [] },
] as const;

function Rail() {
  return (
    <aside className="flex w-[22px] shrink-0 flex-col items-center bg-[#e9eae8] text-[#222]">
      <span className="grid h-[23px] place-items-center"><ProjectBadge /></span>
      <span className="grid h-[20px] w-[12px] place-items-center border-b border-[#d8d9d7]"><Plus className={ICON} /></span>
      {[OverviewIcon, BoardsIcon, ReposIcon, PipelinesIcon, TestPlansIcon, ArtifactsIcon].map((Icon, i) => (
        <a key={i} href="#" className="grid h-[22px] place-items-center"><Icon /></a>
      ))}
      <span className="mt-auto grid h-[22px] w-full place-items-center border-l-2 border-[#0f6cbd] bg-[#cfd2d0]"><Settings className={ICON} /></span>
      <span className="grid h-[22px] place-items-center"><ChevronsRight className="size-[8px]" /></span>
    </aside>
  );
}

function SettingsNav() {
  return (
    <div className="relative w-[109px] shrink-0 overflow-hidden text-[#222]">
      <h2 className="mt-[12px] pl-[9px] text-[8px] leading-[10px] font-semibold">Project Settings</h2>
      <p className="mb-[9px] pl-[9px] leading-[10px] text-[#6b6e6c]">source-control-demos</p>
      {settingsGroups.map(g => (
        <div key={g.title}>
          <h3 className="h-[23px] pl-[15px] text-[7px] leading-[24px] font-semibold">{g.title}</h3>
          <div className={clsx('mr-[6px] grid auto-rows-fr', g.rows)}>
            {g.items.map(([name, Icon]) => (
              <a
                key={name}
                href="#"
                className={clsx(
                  'flex items-center gap-[3px] border-l pl-[14px]',
                  name === 'Repositories' ? 'border-[#0f6cbd] bg-[#e9e9e8]' : 'border-transparent'
                )}
              >
                <Icon className="size-[6px] shrink-0" />
                {name}
              </a>
            ))}
          </div>
        </div>
      ))}
      <span className="absolute top-[3px] right-[1px] h-[345px] w-[3px] rounded-full bg-[#7b7d7c]" />
    </div>
  );
}

function BranchList() {
  return (
    <div className="w-[149px] shrink-0 border-x border-[#e8e8e7] text-[#222]">
      <div className="flex h-[36px] items-center gap-[9px] pr-[11px] pl-[12px]">
        <ArrowLeft className={ICON} />
        <h2 className="flex-1 text-[8px] font-bold">source-control-de...</h2>
        <Plus className={ICON} />
      </div>
      <label className="mx-[10px] mb-[4px] flex h-[13px] items-center gap-[5px] bg-[#ebecea] px-[5px]">
        <ListFilter className="size-[6px]" />
        <input aria-label="Filter by keywords" placeholder="Filter by keywords" className="w-full placeholder:text-[#5c5f5d]" />
      </label>
      <a href="#" className="flex h-[18px] items-center gap-[2px] border-l border-[#0f6cbd] bg-[#e8e8e7] pl-[18px]"><BranchIcon />dev</a>
      <a href="#" className="flex h-[17px] items-center gap-[2px] border-b border-[#ededed] pl-[19px]">
        <BranchIcon />main<Pill>Default</Pill><Pill>Compare</Pill>
      </a>
      <a href="#" className="flex h-[17px] items-center gap-[2px] pl-[19px]"><BranchIcon />test<Lightbulb className="size-[6px]" /></a>
    </div>
  );
}

function Policy({ title, note, on, last, children }: { title: string; note: string; on?: boolean; last?: boolean; children?: React.ReactNode }) {
  return (
    <div className={clsx('flex border-t border-[#ededed] px-[9px] pt-[7px]', on ? 'h-[136px]' : last ? 'h-[45px]' : 'h-[36px]')}>
      <label className="flex h-[10px] w-[60px] shrink-0 items-center gap-[4px]">
        <input
          type="checkbox"
          role="switch"
          aria-label={title}
          defaultChecked={on}
          className="flex h-[9px] w-[18px] appearance-none items-center rounded-full border border-[#8a8a8a] px-[1px] before:size-[5px] before:rounded-full before:bg-[#5a5a5a] checked:justify-end checked:border-[#0f6cbd] checked:bg-[#0f6cbd] checked:before:bg-white"
        />
        {on ? 'On' : 'Off'}
      </label>
      <div>
        <h3 className="leading-[9px] font-bold">{title}</h3>
        <p className="min-h-[14px] w-[164px] text-[5px] leading-[7px] text-[#6b6e6c]">{note}</p>
        {children}
      </div>
    </div>
  );
}

const policySections = [
  ['Build Validation', 'Validate code by pre-merging and building pull request changes.', 'No build policies found, but you can use the add button to create one!'],
  ['Status Checks', 'Require other services to post successful status to complete pull requests.', 'No status checks found, but you can use the add button to create one!'],
  ['Automatically included reviewers', 'Designate code reviewers to automatically include when pull requests change certain areas of code.', 'No automatic reviewer policies found, but you can use the add button to create one!'],
];

function ProjectSettings({ mode }: { mode: 'off' | 'on' | 'scrolled' }) {
  return (
    <>
      <Rail />
      <SettingsNav />
      <BranchList />
      <main className={clsx('relative flex min-w-0 flex-1 flex-col pr-[20px] pl-[14px] text-[#222]', mode === 'scrolled' ? 'pt-[2px]' : 'pt-[8px]')}>
        {mode !== 'scrolled' && <h1 className="h-[18px] shrink-0 text-[8px] leading-[18px] font-semibold">dev</h1>}
        <Tabs
          items={['Settings', 'Policies', 'Security', 'Approvals and checks']}
          active="Policies"
          className={mode === 'scrolled' ? 'h-[20px]' : 'h-[18px]'}
        />
        {mode === 'scrolled' ? (
          <div className={clsx(CARD, 'h-[74px] pt-[3px] pl-[69px]')}>
            <div className="grid grid-cols-[154px_164px] gap-x-[30px] gap-y-[6px]">
              <TickBox checked label="Basic merge (no fast-forward)" note="Preserves history exactly as it happened during development" />
              <TickBox checked label="Squash merge" note="Creates a linear history by condensing the source branch commits into a single new commit on the target branch" />
              <TickBox checked label="Rebase and fast-forward" note="Creates a linear history by replaying the source branch commits onto the target without a merge commit" />
              <TickBox checked label="Rebase with merge commit" note="Creates a semi-linear history by replaying the source branch commits onto the target and then creating a merge commit" />
            </div>
          </div>
        ) : (
          <div className={clsx(CARD, 'mt-[8px]')}>
            <div className="h-[35px] px-[9px] pt-[8px]">
              <h2 className="text-[7px] leading-[11px]">Branch Policies</h2>
              <p className="leading-[10px] text-[#6b6e6c]">
                Note: If any required policy is enabled, this branch cannot be deleted and changes must be made via pull request.
              </p>
            </div>
            <Policy title="Require a minimum number of reviewers" note="Require approval from a specified number of reviewers on pull requests." on={mode === 'on'}>
              {mode === 'on' && (
                <>
                  <label className="mt-[6px] block">
                    <span className="block h-[12px] leading-[10px]">Minimum number of reviewers</span>
                    <input defaultValue="2" className="block h-[13px] w-[136px] border border-[#9b9d9b] px-[7px]" />
                  </label>
                  <div className="mt-[7px] flex flex-col gap-[7px]">
                    <TickBox label="Allow requestors to approve their own changes" />
                    <div className="relative">
                      <TickBox label="Prohibit the most recent pusher from approving their own changes" />
                      <span className="absolute -top-[4px] -left-[3px] h-[16px] w-[223px] border-2 border-[#d0452b]" />
                    </div>
                    <TickBox label="Allow completion even if some reviewers vote to wait or reject" />
                    <TickBox label="When new changes are pushed:" />
                  </div>
                </>
              )}
            </Policy>
            <Policy title="Check for linked work items" note="Encourage traceability by checking for linked work items on pull requests." />
            <Policy title="Check for comment resolution" note="Check to see that all comments have been resolved on pull requests." />
            <Policy title="Limit merge types" note="Control branch history by limiting the available types of merge when pull requests are completed." last />
          </div>
        )}
        {policySections.map(([title, note, empty]) => (
          <div key={title} className={clsx(CARD, 'mt-[9px] h-[52px] px-[9px] pt-[8px]')}>
            <div className="flex items-start">
              <ChevronDown className="mt-[3px] mr-[5px] size-[7px]" />
              <div className="mr-auto">
                <h2 className="flex h-[12px] items-center gap-[7px] text-[7px]">
                  {title}
                  <span className="grid size-[9px] place-items-center rounded-full bg-[#ebecea] text-[5px]">0</span>
                </h2>
                <p className="leading-[8px] text-[#6b6e6c]">{note}</p>
              </div>
              <button className="mr-[9px] flex h-[14px] items-center gap-[4px] rounded-full border border-[#dadbd9] px-[6px]"><ListFilter className="size-[6px]" />Filter</button>
              <button aria-label="Add policy" className="mr-[7px] grid h-[16px] w-[28px] place-items-center bg-[#ecedeb]"><Plus className="size-[6px]" /></button>
            </div>
            <p className="mt-[7px] leading-[8px] text-[#6b6e6c]">{empty}</p>
          </div>
        ))}
        <span
          className={clsx(
            'absolute right-[1px] w-[3px] rounded-full bg-[#7b7d7c]',
            mode === 'off' && 'top-[3px] h-[199px]',
            mode === 'on' && 'top-[3px] h-[175px]',
            mode === 'scrolled' && 'top-[137px] h-[160px]'
          )}
        />
      </main>
    </>
  );
}

/* ---------- pull requests ---------- */

function NewPullRequest({ menu, reviewer }: { menu?: boolean; reviewer?: boolean }) {
  const field = 'block w-full border border-[#9b9d9b] bg-white px-[5px]';
  return (
    <main className="relative flex min-w-0 flex-1 flex-col px-[14px] pt-[8px] text-[#222]">
      <h1 className="h-[18px] text-[8px] leading-[18px] font-semibold">New pull request</h1>
      <div className="flex h-[16px] items-center gap-[3px]">
        <button className={clsx('-ml-[5px] flex h-[14px] w-[41px] items-center gap-[2px] pl-[5px] font-bold', menu && 'bg-[#c9cac8]')}>
          <BranchIcon />dev<ChevronDown className="ml-[2px] size-[7px]" />
        </button>
        into
        <button className="ml-[7px] flex items-center gap-[2px] font-bold"><BranchIcon />main<ChevronDown className="ml-[2px] size-[7px]" /></button>
        <ArrowUpDown className="ml-[12px] size-[5px]" />
      </div>
      <Tabs items={['Overview', 'Files', 'Commits']} active="Overview" counts={['', '1', '1']} className="h-[21px]" />
      <form className={clsx(CARD, 'mt-[8px] w-[337px] px-[9px] pt-[7px] pb-[8px]')}>
        <label className="block">
          <span className="block h-[13px] leading-[12px]">Title</span>
          <input defaultValue="Added info.txt" className={clsx(field, 'h-[13px]')} />
        </label>
        <label className="mt-[5px] block">
          <span className="block h-[13px] leading-[12px]">Description</span>
          <textarea defaultValue="Added info.txt" className={clsx(field, 'h-[51px] resize-none py-[2px] leading-[8px]')} />
        </label>
        <div className="h-[9px] text-right leading-[9px]">14/4000</div>
        <div className="mt-[1px] flex h-[10px] items-center gap-[2px] text-[5px] text-[#8a8d8b]">
          <Info className="size-[4px]" /><a href="#" className="font-semibold text-[#2a6f80]">Markdown supported.</a>
          <span className="mr-auto">Drag &amp; drop, paste, or select files to insert.</span>
          <Info className="size-[4px]" /><a href="#" className="font-semibold text-[#2a6f80]">Link work items.</a>
        </div>
        <div className="flex h-[12px] items-center gap-[9px] pl-[4px]">
          <AtSign className={ICON} /><Hash className={ICON} /><GitPullRequest className={ICON} /><Paperclip className={ICON} />
          <span className="flex gap-[5px]"><PenLine className={ICON} /><ChevronDown className={ICON} /></span>
          <Bold className={ICON} /><Italic className={ICON} /><Code className={ICON} /><Link className={ICON} />
          <List className={ICON} /><ListOrdered className={ICON} /><ListChecks className={ICON} />
        </div>
        <p className="mt-[5px] leading-[8px]">Added info.txt</p>
        <div className="mt-[9px] flex h-[12px] items-center justify-between pr-[12px]">
          Reviewers<button type="button" className="font-bold">Add required reviewers</button>
        </div>
        <div className={clsx('mt-[4px] flex items-center gap-[4px] border border-[#d0d1cf] px-[2px]', reviewer ? 'h-[14px]' : 'h-[13px]')}>
          {reviewer ? (
            <>
              <span className="flex items-center gap-[2px]"><Avatar className="size-[9px] text-[3px]" /><span className="bg-[#f2f3f1]">Matthew Smith</span></span>
              <X className="size-[6px]" /><Plus className="size-[6px]" />
            </>
          ) : (
            <>
              <Users className={ICON} />
              <input aria-label="Search reviewers" placeholder="Search users and groups to add as reviewers" className="w-full placeholder:text-[#5c5f5d]" />
            </>
          )}
        </div>
        <Combo label="Work items to link" className="mt-[7px]" />
        <label className="mt-[6px] block">
          <span className="block h-[13px] leading-[12px]">Tags</span>
          <input className="block h-[12px] w-full border border-[#d0d1cf] px-[5px]" />
        </label>
        <div className="mt-[7px] flex justify-end">
          <button type="button" className="h-[15px] bg-[#0f6cbd] px-[6px] font-bold text-white">Create</button>
          <button type="button" aria-label="More" className="grid h-[15px] w-[14px] place-items-center border-l border-[#3b86c8] bg-[#0f6cbd] text-white"><ChevronDown className="size-[6px]" /></button>
        </div>
      </form>
      {menu && (
        <div className="absolute top-[41px] left-[9px] h-[84px] w-[220px] bg-white pt-[3px] shadow-[0_2px_6px_rgba(0,0,0,0.25)]">
          <label className="mx-[3px] flex h-[14px] items-center gap-[4px] border border-[#0f6c9d] bg-[#eff3ee] px-[5px]">
            <Search className="size-[6px] text-[#777]" />
            <input aria-label="Filter branches" placeholder="Filter branches" className="w-full placeholder:text-[#5c5f5d]" />
          </label>
          <div className="h-[17px] pl-[12px] leading-[21px]">Mine</div>
          {['dev', 'main', 'test'].map(b => (
            <div key={b} className={clsx('flex h-[16px] items-center gap-[3px] pt-[3px] pl-[3px]', b === 'dev' && 'bg-[#d8ecf4]')}>
              <span className="w-[5px]">{b === 'dev' && <Check className="size-[5px]" />}</span>
              <BranchIcon />{b}
            </div>
          ))}
        </div>
      )}
    </main>
  );
}

type PullRequestProps = { approved?: boolean; menu?: boolean; checkedAt?: string; count: number };

function PullRequest({ approved, menu, checkedAt = 'Just now', count }: PullRequestProps) {
  return (
    <main className="relative flex min-w-0 flex-1 flex-col px-[14px] pt-[8px] text-[#222]">
      <div className="flex h-[20px] items-center">
        <h1 className="mr-auto text-[9px] font-normal">Added info.txt</h1>
        <button className="h-[14px] bg-[#ecedeb] px-[6px] font-bold">Approve</button>
        <button aria-label="Review options" className={clsx('mr-[4px] grid h-[14px] w-[14px] place-items-center border-l border-[#ddd]', menu ? 'bg-[#c9cac8]' : 'bg-[#ecedeb]')}>
          <ChevronDown className="size-[6px]" />
        </button>
        <button className="flex h-[14px] items-center gap-[5px] bg-[#0f6cbd] px-[6px] font-bold text-white"><BranchIcon />Complete</button>
        <button aria-label="Complete options" className={clsx('mr-[4px] grid h-[14px] w-[14px] place-items-center border-l border-[#3b86c8] text-white', approved ? 'bg-[#0b4f8c]' : 'bg-[#0f6cbd]')}>
          <ChevronDown className="size-[6px]" />
        </button>
        <button aria-label="More" className="grid h-[14px] w-[15px] place-items-center bg-[#ecedeb]"><MoreVertical className="size-[6px]" /></button>
      </div>
      <div className="flex h-[14px] items-center gap-[3px] text-[#5c5f5d]">
        <span className="rounded-full bg-[#0f6cbd] px-[3px] leading-[11px] text-white">Active</span>
        <span>!3</span>
        <Avatar />
        <span>
          Matthew Smith proposes to merge <a href="#" className="font-semibold text-[#0f5f92] underline">dev</a> into{' '}
          <a href="#" className="font-semibold text-[#0f5f92] underline">main</a>
        </span>
        <Avatar className="ml-auto size-[11px] text-[4px]" />
      </div>
      <Tabs items={['Overview', 'Files', 'Updates', 'Commits']} active="Overview" className="mt-[2px] h-[22px]" />
      <div className="mt-[7px] flex gap-[14px]">
        <div className="min-w-0 flex-1">
          <div className={clsx(CARD, 'flex h-[29px] items-center gap-[6px] pl-[10px]')}>
            <OkCircle />
            <div className="leading-[7px]">
              No merge conflicts
              <p className="text-[5px] text-[#6b6e6c]">Last checked {checkedAt}</p>
            </div>
          </div>
          <div className={clsx(CARD, 'mt-[7px] h-[51px] px-[9px] pt-[8px]')}>
            <div className="flex h-[14px] items-center justify-between pr-[9px]">
              <h2 className="text-[7px]">Description</h2>
              <Pencil className="size-[6px]" />
            </div>
            <p className="mt-[10px]">Added info.txt</p>
          </div>
          <div className="mt-[14px] flex justify-end pr-[3px]">
            <Button>Show everything ({count})<ChevronDown className="size-[6px]" /></Button>
          </div>
          <div className="mt-[14px] flex items-center gap-[6px]">
            <MessageSquare className="ml-[2px] size-[7px] shrink-0" />
            <div className={clsx(CARD, 'mr-[2px] flex h-[29px] flex-1 items-center gap-[6px] px-[9px]')}>
              <Avatar />
              <input aria-label="Comment" placeholder="Add a comment..." className="h-[13px] w-full border border-[#9b9d9b] px-[5px] placeholder:text-[#5c5f5d]" />
            </div>
          </div>
          <div className="mt-[3px] mr-[11px] ml-[4px]">
            {approved && (
              <div className="flex h-[24px] items-center gap-[5px]">
                <span className="mr-[12px] size-[3px] rounded-full bg-[#c6c8c6]" />
                <OkCircle />
                <Avatar />
                Matthew Smith approved the pull request
                <span className="ml-auto text-[5px] text-[#7a7d7b]">Just now</span>
              </div>
            )}
            <div className="flex h-[24px] items-center gap-[5px]">
              <span className="mr-[12px] size-[3px] rounded-full bg-[#c6c8c6]" />
              <Avatar />
              Matthew Smith created the pull request
              <span className="ml-auto text-[5px] text-[#7a7d7b]">{approved ? checkedAt : 'Just now'}</span>
            </div>
          </div>
        </div>
        <aside className="w-[155px] shrink-0">
          <div className="flex h-[16px] items-center justify-between pr-[6px]">
            <h2 className="text-[7px]">Reviewers</h2>
            <Button>Add<ChevronDown className="size-[6px]" /></Button>
          </div>
          <p className="mt-[5px] text-[5px] leading-[8px] text-[#6b6e6c]">Required</p>
          <p className="mt-[3px] h-[18px] bg-[#f1f3f0] text-center leading-[18px] text-[#6b6e6c]">No required reviewers</p>
          <p className="mt-[7px] text-[5px] leading-[8px] text-[#6b6e6c]">Optional</p>
          <div className="mt-[6px] flex h-[16px] items-center gap-[5px] pl-[5px]">
            <Dot kind={approved ? 'ok' : 'none'} />
            <Avatar />
            <div className="leading-[7px]">
              Matthew Smith
              <p className="text-[5px] text-[#6b6e6c]">{approved ? 'Approved' : 'No review yet'}</p>
            </div>
          </div>
          {['Tags', 'Work items'].map(name => (
            <React.Fragment key={name}>
              <div className="mt-[13px] flex h-[16px] items-center justify-between pr-[6px]">
                <h2 className="text-[7px]">{name}</h2>
                <button aria-label={'Add ' + name} className="grid h-[15px] w-[28px] place-items-center bg-[#ecedeb]"><Plus className="size-[6px]" /></button>
              </div>
              <p className="mt-[5px] h-[18px] bg-[#f1f3f0] text-center leading-[18px] text-[#6b6e6c]">No {name.toLowerCase()}</p>
            </React.Fragment>
          ))}
        </aside>
      </div>
      {menu && (
        <>
          <div className="absolute top-[26px] right-[107px] h-[82px] w-[102px] bg-white px-[6px] pt-[3px] shadow-[0_2px_6px_rgba(0,0,0,0.25)]">
            {([['Approve', 'ok'], ['Approve with suggestions', 'ok'], ['Wait for author', 'wait'], ['Reject', 'no']] as const).map(([t, k]) => (
              <div key={t} className="flex h-[14px] items-center gap-[5px]"><Dot kind={k} />{t}</div>
            ))}
            <div className="mt-[3px] flex h-[19px] items-center gap-[5px] border-t border-[#d8d8d8]"><Dot kind="none" />Reset feedback</div>
          </div>
          <span className="absolute top-[25px] right-[55px] h-[14px] bg-[#2d2f2e] px-[5px] leading-[14px] text-white">More actions</span>
        </>
      )}
    </main>
  );
}

function CompletePanel() {
  return (
    <SidePanel title="Complete pull request" action="Complete merge">
      <label className="block">
        <span className="mt-[2px] block h-[13px] leading-[12px]">Merge type</span>
        <span className="relative flex h-[14px] items-center border border-[#9b9d9b]">
          <select className="h-full w-full appearance-none pl-[4px]"><option>Merge (no fast forward)</option></select>
          <ChevronDown className="absolute right-[4px] size-[7px]" />
        </span>
      </label>
      <svg viewBox="0 0 64 16" className="mt-[12px] h-[16px] w-[64px] self-start">
        <path d="M2 4h58" stroke="#b8bab8" strokeWidth="1.500" />
        <path d="M5 4h2c5 0 6 7.500 12 7.500h24c7 0 8-7.500 14-7.500" stroke="#1a73b8" strokeWidth="1.200" fill="none" />
        <circle cx="2" cy="4" r="1.800" fill="#a0a2a0" />
        <circle cx="21" cy="4" r="1.800" fill="#a0a2a0" />
        <circle cx="21" cy="11.500" r="2" fill="#1a73b8" />
        <circle cx="41" cy="11.500" r="2" fill="#1a73b8" />
        <circle cx="60" cy="4" r="1.600" fill="#fff" stroke="#1a73b8" />
      </svg>
      <h3 className="mt-[8px] mb-[8px] leading-[8px]">Post-completion options</h3>
      <div className="flex flex-col gap-[5px] pl-[2px]">
        <TickBox checked label="Complete associated work items after merging" />
        <TickBox checked label="Delete dev after merging" />
        <TickBox label="Customize merge commit message" />
      </div>
    </SidePanel>
  );
}

const repoTab = 'source-control-demos - Repos';
const settingsTab = 'Settings - Repositories (source-control-demos)';
const settingsUrl = '_settings/repositories?_a=policiesMid&repo=44b30311-eedc-46aa-b5ae-987cab2f8114&refs=refs/heads/dev';
const createUrl = '_git/source-control-demos/pullrequestcreate?sourceRef=dev&targetRef=main&sourceRepositoryId=44b30311-eedc-46aa-b5ae-987cab2f8114';
const prTab = 'Pull request 3: Added info.txt - Repos';
const prUrl = '_git/source-control-demos/pullrequest/3';
const statusBase = 'https://dev.azure.com/matthew0694/source-control-demos/_git/source-control-demos?path=';

export default function App() {
  return (
    <div className="bg-black font-['Inter',sans-serif] text-[6px] leading-[8px] font-medium">
      <header className="pl-[5px] font-['Liberation_Sans',sans-serif] text-[32px] leading-[42px] font-normal text-white">
        <p>File: 05-demo manage pull requests in azure repos.mp4 (20.49 MB)</p>
        <p>Video: avc1, 00:07:16, 292 Kbps, 1920x1080, 30.000 fps</p>
        <p>Audio: mp4a-40-2, 93 Kbps, 48 Khz</p>
      </header>
      <div className="grid grid-cols-4">
        <Frame time="00:00:21" tab={repoTab} url="_git/source-control-demos?path=%2F&version=GBmain" cursor={<Cursor at="left-[175px] top-[289px]" />}>
          <Sidebar active="Files" />
          <Tree files={baseFiles} />
          <Files
            branch="main"
            banner={<>Committed <GitCommitVertical className="size-[6px]" /> <a href="#" className="text-[#1b6375]">29e8a108: Deleted info.txt</a></>}
          />
        </Frame>
        <Frame time="00:00:44" tab="Branches - Repos" url="_git/source-control-demos/branches" crumbs={['Branches']} overlay={<CreateBranchDialog />}>
          <Sidebar active="Branches" />
          <Branches />
        </Frame>
        <Frame time="00:01:07" tab={repoTab} url="_git/source-control-demos?version=GBdev" status={statusBase + '/templates&version=GBdev'} cursor={<Cursor kind="hand" at="left-[173px] top-[140px]" />}>
          <Sidebar active="Files" />
          <Tree files={baseFiles} hovered="templates" />
          <Files branch="dev" />
        </Frame>
        <Frame time="00:01:30" tab={repoTab} url="_git/source-control-demos?version=GBdev" cursor={<Cursor at="left-[464px] top-[104px]" />}>
          <Sidebar active="Files" />
          <Tree files={baseFiles} />
          <Files branch="dev" />
        </Frame>

        <Frame time="00:01:53" tab="info.txt - Repos" url="_git/source-control-demos?path=/info.txt&version=GBdev" cursor={<Cursor at="left-[482px] top-[346px]" />}>
          <Sidebar active="Files" />
          <Tree files={filesWithInfo} selected="info.txt" />
          <Editor buttons />
        </Frame>
        <Frame time="00:02:16" tab="info.txt - Repos" url="_git/source-control-demos?path=/info.txt&version=GBdev" overlay={<CommitPanel />} cursor={<Cursor at="left-[765px] top-[434px]" />}>
          <Sidebar active="Files" />
          <Tree files={filesWithInfo} selected="info.txt" />
          <Editor text="This is my update" />
        </Frame>
        <Frame time="00:02:39" tab={settingsTab} url={settingsUrl} crumbs={['Settings', 'Repositories']} compact cursor={<Cursor at="left-[685px] top-[316px]" />}>
          <ProjectSettings mode="off" />
        </Frame>
        <Frame time="00:03:02" tab={settingsTab} url={settingsUrl} crumbs={['Settings', 'Repositories']} compact cursor={<Cursor kind="hand" at="left-[367px] top-[225px]" />}>
          <ProjectSettings mode="on" />
        </Frame>

        <Frame time="00:03:25" tab={settingsTab} url={settingsUrl} crumbs={['Settings', 'Repositories']} compact cursor={<Cursor kind="hand" at="left-[303px] top-[293px]" />}>
          <ProjectSettings mode="scrolled" />
        </Frame>
        <Frame time="00:03:48" tab={repoTab} url="_git/source-control-demos?version=GBdev" status={statusBase + '/info.txt'} cursor={<Cursor kind="hand" at="left-[298px] top-[307px]" />}>
          <Sidebar active="Files" />
          <Tree files={filesWithInfo} />
          <Files branch="dev" files={filesWithInfo} hovered="info.txt" banner={<>You updated <BranchIcon className="size-[6px]" /> dev 3m ago</>} />
        </Frame>
        <Frame time="00:04:11" tab="Pull requests - Repos" url={createUrl} crumbs={['Pull requests']} cursor={<Cursor kind="hand" at="left-[161px] top-[88px]" />}>
          <Sidebar active="Pull requests" />
          <NewPullRequest menu />
        </Frame>
        <Frame time="00:04:34" tab="Pull requests - Repos" url={createUrl} crumbs={['Pull requests']} cursor={<Cursor kind="text" at="left-[172px] top-[369px]" />}>
          <Sidebar active="Pull requests" />
          <NewPullRequest reviewer />
        </Frame>

        <Frame time="00:04:57" tab={prTab} url={prUrl} crumbs={['Pull requests']} cursor={<Cursor at="left-[487px] top-[338px]" />}>
          <Sidebar active="Pull requests" />
          <PullRequest count={1} />
        </Frame>
        <Frame time="00:05:20" tab={prTab} url={prUrl} crumbs={['Pull requests']} cursor={<Cursor kind="hand" at="left-[638px] top-[105px]" />}>
          <Sidebar active="Pull requests" />
          <PullRequest menu count={1} />
        </Frame>
        <Frame time="00:05:43" tab={prTab} url={prUrl} crumbs={['Pull requests']} cursor={<Cursor kind="hand" at="left-[756px] top-[73px]" />}>
          <Sidebar active="Pull requests" />
          <PullRequest approved count={2} />
        </Frame>
        <Frame time="00:06:06" tab={prTab} url={prUrl} crumbs={['Pull requests']} overlay={<CompletePanel />} cursor={<Cursor at="left-[605px] top-[136px]" />}>
          <Sidebar active="Pull requests" />
          <PullRequest approved checkedAt="2m ago" count={2} />
        </Frame>
      </div>
    </div>
  );
}
